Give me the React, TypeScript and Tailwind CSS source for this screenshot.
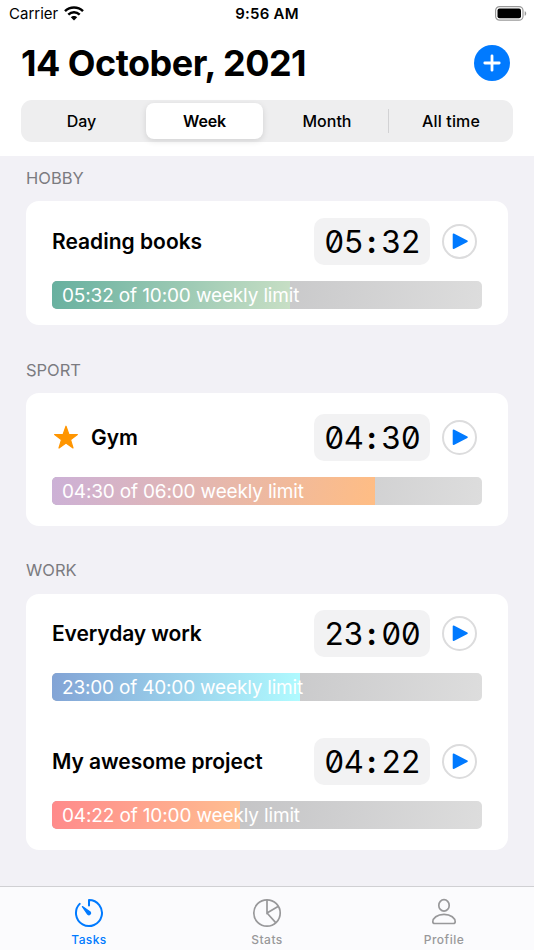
import React from 'react';

type Task = {
  name: string;
  time: string;
  limit: string;
  progress: number;
  gradient: string;
  starred?: boolean;
  titleClass: string;
  limitClass: string;
};

type Section = {
  title: string;
  className: string;
  cardClass: string;
  tasks: Task[];
};

const sections: Section[] = [
  {
    title: 'HOBBY',
    className: 'pt-[11px]',
    cardClass: 'mt-[11px] h-[124px] pt-[16.5px]',
    tasks: [
      {
        name: 'Reading books',
        time: '05:32',
        limit: '10:00',
        progress: 55.4,
        gradient: 'from-[#67b09f] to-[#c8dfc5]',
        titleClass: 'tracking-[0px]',
        limitClass: 'tracking-[-0.14px]',
      },
    ],
  },
  {
    title: 'SPORT',
    className: 'pt-[34px]',
    cardClass: 'mt-[11px] h-[132.5px] pt-[20.5px]',
    tasks: [
      {
        name: 'Gym',
        time: '04:30',
        limit: '06:00',
        progress: 75.1,
        gradient: 'from-[#ccb1d7] to-[#ffbd84]',
        starred: true,
        titleClass: 'tracking-[-0.1px]',
        limitClass: 'tracking-[-0.17px]',
      },
    ],
  },
  {
    title: 'WORK',
    className: 'pt-[33.5px]',
    cardClass: 'mt-[11.5px] h-[256.5px] pt-4',
    tasks: [
      {
        name: 'Everyday work',
        time: '23:00',
        limit: '40:00',
        progress: 57.6,
        gradient: 'from-[#82a3d5] to-[#b0fbff]',
        titleClass: 'tracking-[-0.1px]',
        limitClass: 'tracking-[-0.19px]',
      },
      {
        name: 'My awesome project',
        time: '04:22',
        limit: '10:00',
        progress: 43.7,
        gradient: 'from-[#ff8a8b] to-[#ffbf91]',
        titleClass: 'tracking-[-0.04px]',
        limitClass: 'tracking-[-0.14px]',
      },
    ],
  },
];

const StatusBar = () => (
  <div className="flex h-7 items-center justify-between pl-[9px] pr-[7px] text-[15px] leading-7">
    <div className="flex w-[120px] items-center gap-1.5">
      <span>Carrier</span>
      <svg width="20" height="15" viewBox="0 0 20 15" fill="none" stroke="#000" strokeWidth="2.5" className="-mt-[2px]">
        <path d="M1 5.1C6 .4 14 .4 19 5.1" />
        <path d="M4.3 8.6C7.6 5.5 12.4 5.5 15.7 8.6" />
        <path d="M6.8 11.2C8.5 9.5 11.5 9.5 13.2 11.2L10 14.4Z" fill="#000" stroke="none" />
      </svg>
    </div>
    <span className="pr-[2px] font-semibold tracking-[0.25px]">9:56 AM</span>
    <div className="flex w-[120px] justify-end">
      <svg width="32" height="15" viewBox="0 0 32 15" className="-mt-[2px]">
        <rect x="0.6" y="0.6" width="27.4" height="13.6" rx="4" fill="none" stroke="#999" strokeWidth="1.2" />
        <rect x="2.5" y="2.5" width="23.5" height="9.8" rx="2" />
        <path d="M29.7 5.2c2 .7 2 3.8 0 4.5z" fill="#999" />
      </svg>
    </div>
  </div>
);

const Segments = () => (
  <div className="flex h-[41.5px] rounded-[11px] bg-[#eeeeef] p-[3px] text-[16px] font-medium">
    <div className="flex w-[115px] items-center justify-center pt-px">Day</div>
    <div className="ml-[7px] flex w-[117px] items-center justify-center rounded-[8px] bg-white pt-px font-semibold tracking-[-0.15px] shadow-[0_2px_6px_rgba(0,0,0,0.12)]">
      Week
    </div>
    <div className="flex w-[125px] items-center justify-center pt-px pl-[3px]">Month</div>
    <div className="my-[6px] w-px bg-[#d2d2d4]" />
    <div className="flex flex-1 items-center justify-center pt-px pl-[3px] tracking-[0.15px]">All time</div>
  </div>
);

const TimeBox = ({ time }: { time: string }) => {
  const [hours, minutes] = time.split(':');
  return (
    <div className="flex h-[47px] w-[116.5px] items-center justify-center rounded-[10px] bg-[#f2f2f3] pt-[2px] text-[31px] [font-feature-settings:'zero','tnum']">
      <span className="w-[38px] text-center tracking-[-0.5px]">{hours}</span>
      <span className="w-[19px] text-center font-bold">:</span>
      <span className="w-[38px] text-center tracking-[-0.5px]">{minutes}</span>
    </div>
  );
};

const PlayButton = () => (
  <button className="ml-3 flex size-[35px] items-center justify-center rounded-full border-2 border-[#dcdcdd]">
    <svg width="17" height="18" viewBox="0 0 17 18" className="ml-0.5">
      <path d="M1.5 2.2 15 9.2 1.5 16.2Z" fill="#007aff" stroke="#007aff" strokeWidth="1.6" strokeLinejoin="round" />
    </svg>
  </button>
);

const TaskRow = ({ task }: { task: Task }) => (
  <div>
    <div className="flex h-[47px] items-center pr-[5px]">
      {task.starred && (
        <svg width="26" height="25" viewBox="0 0 26 25" className="mr-[12px] ml-[1px]">
          <path
            d="M13 1.2 15.8 9.3 24.4 9.5 17.5 14.7 20 23 13 18.1 6 23 8.5 14.7 1.6 9.5 10.2 9.3Z"
            fill="#ff9500"
            stroke="#ff9500"
            strokeWidth="1.2"
            strokeLinejoin="round"
          />
        </svg>
      )}
      <div className={`flex-1 pt-px text-[21px] font-semibold ${task.titleClass}`}>{task.name}</div>
      <TimeBox time={task.time} />
      <PlayButton />
    </div>
    <div className="relative mt-4 h-[28px] overflow-hidden rounded-[5px] bg-linear-[100deg] from-[#b2b2b5] to-[#dddddd]">
      <div className={`h-full bg-linear-[100deg] ${task.gradient}`} style={{ width: `${task.progress}%` }} />
      <div className={`absolute inset-0 pl-[10px] text-[19px] leading-[29px] text-white ${task.limitClass}`}>
        {task.time} of {task.limit} weekly limit
      </div>
    </div>
  </div>
);

const TabBar = () => (
  <nav className="grid h-16 grid-cols-3 border-t border-[#d0d0d3] bg-[#fbfbfd] pt-[11px] text-[12px] font-medium text-[#98989a]">
    <div className="flex flex-col items-center text-[#007aff]">
      <svg width="30" height="30" viewBox="0 0 30 30" fill="none" stroke="currentColor" strokeWidth="2" strokeLinecap="round" strokeLinejoin="round">
        <path d="M15 7.5V2A13 13 0 1 1 5.7 5.9" />
        <path d="M8.4 8.6 13.6 16.2C15 17.9 17.6 15.8 16.2 13.9Z" fill="currentColor" strokeWidth="1.2" />
      </svg>
      <span className="mt-[4px] leading-4 tracking-[0.4px]">Tasks</span>
    </div>
    <div className="flex flex-col items-center">
      <svg width="30" height="30" viewBox="0 0 30 30" fill="none" stroke="currentColor" strokeWidth="1.7">
        <circle cx="15" cy="15" r="13.2" />
        <path d="M15 1.8V15L26 8.5M15 15l8.7 9.6" />
      </svg>
      <span className="mt-[4px] leading-4 tracking-[0.5px]">Stats</span>
    </div>
    <div className="flex flex-col items-center pr-[2px]">
      <svg width="30" height="30" viewBox="0 0 30 30" fill="none" stroke="currentColor" strokeWidth="1.7">
        <ellipse cx="15" cy="7.4" rx="5.2" ry="5.7" />
        <path d="M15 16.3c7 0 11.2 4 11.2 7.5 0 1.2-.8 1.7-2 1.7H5.8c-1.2 0-2-.5-2-1.7 0-3.5 4.2-7.5 11.2-7.5Z" />
      </svg>
      <span className="mt-[4px] leading-4 tracking-[0.5px]">Profile</span>
    </div>
  </nav>
);

export default function App() {
  return (
    <div className="flex h-[950px] w-[534px] flex-col overflow-hidden bg-[#f2f1f6] font-['Inter',sans-serif] text-black">
      <header className="h-[156px] bg-white">
        <StatusBar />
        <div className="px-[21px]">
          <div className="flex h-[72px] items-center justify-between pr-[3px] pb-[2px]">
            <h1 className="text-[36px] font-bold tracking-[-0.52px]">14 October, 2021</h1>
            <button className="flex size-9 items-center justify-center rounded-full bg-[#007aff]">
              <svg width="18" height="18" viewBox="0 0 18 18" stroke="#fff" strokeWidth="2.8" strokeLinecap="round">
                <path d="M9 1.8v14.4M1.8 9h14.4" />
              </svg>
            </button>
          </div>
          <Segments />
        </div>
      </header>

      <main className="flex-1 px-[26px]">
        {sections.map((section) => (
          <section key={section.title} className={section.className}>
            <h2 className="text-[16.5px] leading-[23px] text-[#7b7b80]">{section.title}</h2>
            <div className={`flex flex-col gap-[37px] rounded-[13px] bg-white px-[26px] ${section.cardClass}`}>
              {section.tasks.map((task) => (
                <TaskRow key={task.name} task={task} />
              ))}
            </div>
          </section>
        ))}
      </main>

      <TabBar />
    </div>
  );
}
